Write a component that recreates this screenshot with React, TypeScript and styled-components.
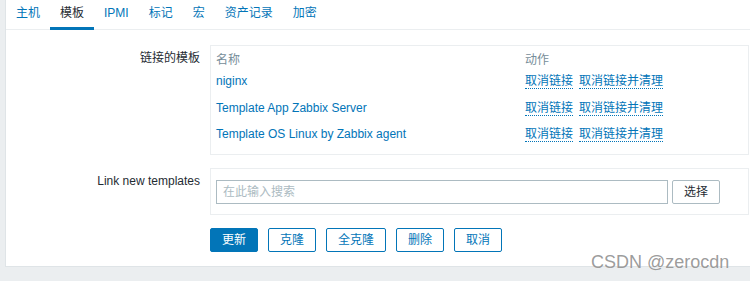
import React from "react";
import styled, { createGlobalStyle } from "styled-components";

const GlobalStyle = createGlobalStyle`
  html, body {
    margin: 0;
    padding: 0;
    background: #ebeef0;
    overflow: hidden;
  }
  body {
    font-family: "Liberation Sans", Arial, "Noto Sans CJK SC", sans-serif;
    font-size: 12px;
    line-height: 14px;
    color: #1f2c33;
  }
`;

const Page = styled.div`
  position: relative;
  height: 281px;
  padding-left: 5px;
  box-sizing: border-box;
`;

const Panel = styled.div`
  background: #ffffff;
  border-left: 1px solid #dfe4e7;
  border-bottom: 1px solid #dfe4e7;
  padding-bottom: 14px;
`;

const TabNav = styled.div`
  display: flex;
  height: 30px;
  box-shadow: inset 0 -1px 0 #ebeef0;
`;

const Tab = styled.div<{ $active?: boolean }>`
  box-sizing: border-box;
  height: 30px;
  padding: 0 10px;
  line-height: 27px;
  color: ${(p) => (p.$active ? "#1f2c33" : "#0275b8")};
  border-bottom: 3px solid ${(p) => (p.$active ? "#0275b8" : "transparent")};
  cursor: pointer;
`;

const Form = styled.div`
  display: grid;
  grid-template-columns: 204px 539px;
  row-gap: 13px;
  padding-top: 15px;
`;

const Label = styled.div`
  text-align: right;
  padding-right: 10px;
  padding-top: 6px;
  line-height: 14px;
`;

const Box = styled.div<{ $pad: string }>`
  border: 1px solid #ebeef0;
  padding: ${(p) => p.$pad};
`;

const TemplateTable = styled.div`
  display: grid;
  grid-template-columns: 309px 1fr;
`;

const HeadCell = styled.div`
  line-height: 18px;
  color: #768d99;
`;

const Cell = styled.div`
  box-sizing: border-box;
  height: 26.5px;
  padding-top: 5px;
  line-height: 14px;
  color: #0275b8;
`;

const Actions = styled(Cell)`
  display: flex;
  align-items: flex-start;
  gap: 6px;
`;

const DottedLink = styled.span`
  color: #0275b8;
  border-bottom: 1px dotted #0275b8;
  cursor: pointer;
`;

const SearchRow = styled.div`
  display: flex;
  gap: 4px;
`;

const SearchInput = styled.input`
  box-sizing: border-box;
  width: 452px;
  height: 24px;
  margin: 0;
  padding: 0 6px;
  border: 1px solid #acbbc2;
  border-radius: 0;
  font-family: inherit;
  font-size: 12px;
  color: #1f2c33;
  background: #ffffff;
  outline: none;
  &::placeholder {
    color: #acbbc2;
  }
`;

const Button = styled.button<{ $variant: "primary" | "alt" | "grey" }>`
  box-sizing: border-box;
  height: 24px;
  margin: 0;
  padding: 0 11px;
  border-radius: 2px;
  font-family: inherit;
  font-size: 12px;
  line-height: 22px;
  cursor: pointer;
  border: 1px solid
    ${(p) => (p.$variant === "grey" ? "#acbbc2" : "#0275b8")};
  background: ${(p) => (p.$variant === "primary" ? "#0275b8" : "#ffffff")};
  color: ${(p) =>
    p.$variant === "primary"
      ? "#ffffff"
      : p.$variant === "alt"
      ? "#0275b8"
      : "#1f2c33"};
`;

const ButtonRow = styled.div`
  grid-column: 2;
  display: flex;
  gap: 10px;
`;

const Watermark = styled.div`
  position: absolute;
  left: 591px;
  top: 253px;
  font-family: "Liberation Sans", Arial, sans-serif;
  font-size: 18px;
  line-height: 18px;
  color: rgba(130, 130, 130, 0.8);
  text-shadow: 0 0 1px rgba(255, 255, 255, 0.6);
  white-space: nowrap;
  pointer-events: none;
`;

const tabs = ["主机", "模板", "IPMI", "标记", "宏", "资产记录", "加密"];
const templates = [
  "niginx",
  "Template App Zabbix Server",
  "Template OS Linux by Zabbix agent",
];

export default function App() {
  return (
    <>
      <GlobalStyle />
      <Page>
        <Panel>
          <TabNav>
            {tabs.map((t) => (
              <Tab key={t} $active={t === "模板"}>
                {t}
              </Tab>
            ))}
          </TabNav>
          <Form>
            <Label>链接的模板</Label>
            <Box $pad="5px">
              <TemplateTable>
                <HeadCell>名称</HeadCell>
                <HeadCell>动作</HeadCell>
                {templates.map((name) => (
                  <React.Fragment key={name}>
                    <Cell>{name}</Cell>
                    <Actions>
                      <DottedLink>取消链接</DottedLink>
                      <DottedLink>取消链接并清理</DottedLink>
                    </Actions>
                  </React.Fragment>
                ))}
              </TemplateTable>
            </Box>
            <Label>Link new templates</Label>
            <Box $pad="11px 5px 10px">
              <SearchRow>
                <SearchInput placeholder="在此输入搜索" />
                <Button $variant="grey">选择</Button>
              </SearchRow>
            </Box>
            <ButtonRow>
              <Button $variant="primary">更新</Button>
              <Button $variant="alt">克隆</Button>
              <Button $variant="alt">全克隆</Button>
              <Button $variant="alt">删除</Button>
              <Button $variant="alt">取消</Button>
            </ButtonRow>
          </Form>
        </Panel>
        <Watermark>CSDN @zerocdn</Watermark>
      </Page>
    </>
  );
}
